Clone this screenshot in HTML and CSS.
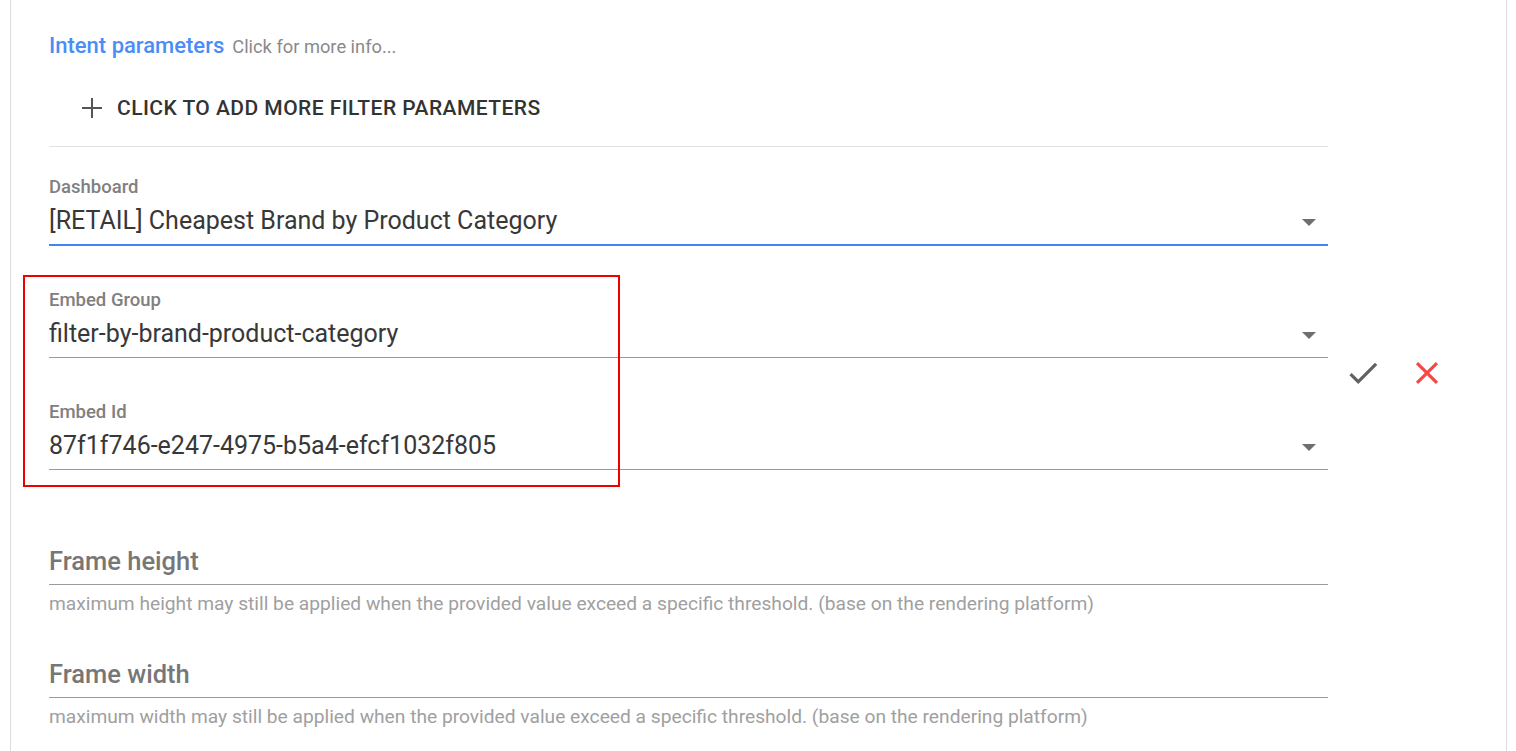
FILE: index.html
```html
<!DOCTYPE html>
<html>
<head>
<meta charset="utf-8">
<link rel="stylesheet" href="styles.css">
</head>
<body>
<div class="panel">
  <div class="header">
    <span class="title">Intent parameters</span>
    <span class="info">Click for more info...</span>
  </div>
  <div class="form">
    <div class="add-btn">
      <svg class="plus" width="22" height="22" viewBox="0 0 22 22"><path d="M11 1v20M1 11h20" stroke="#555" stroke-width="2" fill="none"/></svg>
      <span>CLICK TO ADD MORE FILTER PARAMETERS</span>
    </div>
    <div class="divider"></div>

    <div class="field first">
      <div class="label">Dashboard</div>
      <div class="control focused">
        <span class="value">[RETAIL] Cheapest Brand by Product Category</span>
        <span class="arrow"></span>
      </div>
    </div>
  </div>

  <div class="embed-row">
    <div class="form">
      <div class="field">
        <div class="label">Embed Group</div>
        <div class="control">
          <span class="value">filter-by-brand-product-category</span>
          <span class="arrow"></span>
        </div>
      </div>
      <div class="field">
        <div class="label">Embed Id</div>
        <div class="control">
          <span class="value">87f1f746-e247-4975-b5a4-efcf1032f805</span>
          <span class="arrow"></span>
        </div>
      </div>
    </div>
    <div class="actions">
      <svg class="icon" width="38" height="38" viewBox="0 0 24 24"><path fill="#616161" d="M9 16.17L4.83 12l-1.42 1.41L9 19 21 7l-1.41-1.41z"/></svg>
      <svg class="icon" width="38" height="38" viewBox="0 0 24 24"><path fill="#f44848" d="M19 6.41L17.59 5 12 10.59 6.41 5 5 6.41 10.59 12 5 17.59 6.41 19 12 13.41 17.59 19 19 17.59 13.41 12z"/></svg>
    </div>
  </div>

  <div class="form">
    <div class="frame first-frame">
      <div class="frame-input">Frame height</div>
      <div class="helper">maximum height may still be applied when the provided value exceed a specific threshold. (base on the rendering platform)</div>
    </div>
    <div class="frame">
      <div class="frame-input">Frame width</div>
      <div class="helper">maximum width may still be applied when the provided value exceed a specific threshold. (base on the rendering platform)</div>
    </div>
  </div>

  <div class="highlight"></div>
</div>
</body>
</html>
```

FILE: styles.css
```css
html, body {
  margin: 0;
  padding: 0;
  background: #fff;
  font-family: Roboto, "Liberation Sans", Arial, sans-serif;
  overflow: hidden;
}

.panel {
  position: relative;
  margin-left: 10px;
  width: 1497px;
  box-sizing: border-box;
  min-height: 751px;
  border-left: 1px solid #dedede;
  border-right: 1px solid #dedede;
  padding: 33px 0 0 38px;
}

.header {
  line-height: 26px;
  height: 26px;
  white-space: nowrap;
}

.title {
  font-size: 22px;
  font-weight: 500;
  color: #4a8df6;
}

.info {
  font-size: 18.3px;
  color: #8a8a8a;
  margin-left: 4px;
}

.form {
  width: 1279px;
}

.add-btn {
  margin-top: 37px;
  height: 24px;
  display: flex;
  align-items: center;
  padding-left: 32px;
  font-size: 21px;
  font-weight: 500;
  letter-spacing: 0.45px;
  color: #333;
  line-height: 24px;
}

.plus {
  margin-right: 14px;
  flex: none;
}

.divider {
  margin-top: 26px;
  height: 1px;
  background: #e2e2e2;
}

.field {
  padding-top: 44px;
}

.field.first {
  padding-top: 30px;
}

.label {
  font-size: 18.5px;
  font-weight: 500;
  color: #808080;
  line-height: 21px;
  height: 21px;
}

.control {
  margin-top: 9px;
  display: flex;
  align-items: center;
  padding-bottom: 9px;
  border-bottom: 1px solid #9a9a9a;
}

.control.focused {
  border-bottom: 2px solid #4285f4;
}

.value {
  flex: 1;
  font-size: 25px;
  line-height: 28px;
  color: #383838;
}

.arrow {
  width: 0;
  height: 0;
  border-left: 7px solid transparent;
  border-right: 7px solid transparent;
  border-top: 7px solid #6f6f6f;
  margin-right: 12px;
  margin-top: 2px;
}

.embed-row {
  display: flex;
  align-items: flex-start;
}

.actions {
  display: flex;
  gap: 26px;
  margin-left: 16px;
  padding-top: 108px;
}

.icon {
  display: block;
}

.frame {
  padding-top: 44px;
}

.frame.first-frame {
  padding-top: 76px;
}

.frame-input {
  font-size: 25.5px;
  font-weight: 500;
  color: #777;
  line-height: 30px;
  padding-bottom: 8px;
  border-bottom: 1px solid #9a9a9a;
}

.helper {
  margin-top: 8px;
  font-size: 19.2px;
  line-height: 22px;
  color: #a0a0a0;
  white-space: nowrap;
}

.highlight {
  position: absolute;
  left: 12px;
  top: 275px;
  width: 597px;
  height: 212px;
  box-sizing: border-box;
  border: 2px solid #e00;
  pointer-events: none;
}
```
